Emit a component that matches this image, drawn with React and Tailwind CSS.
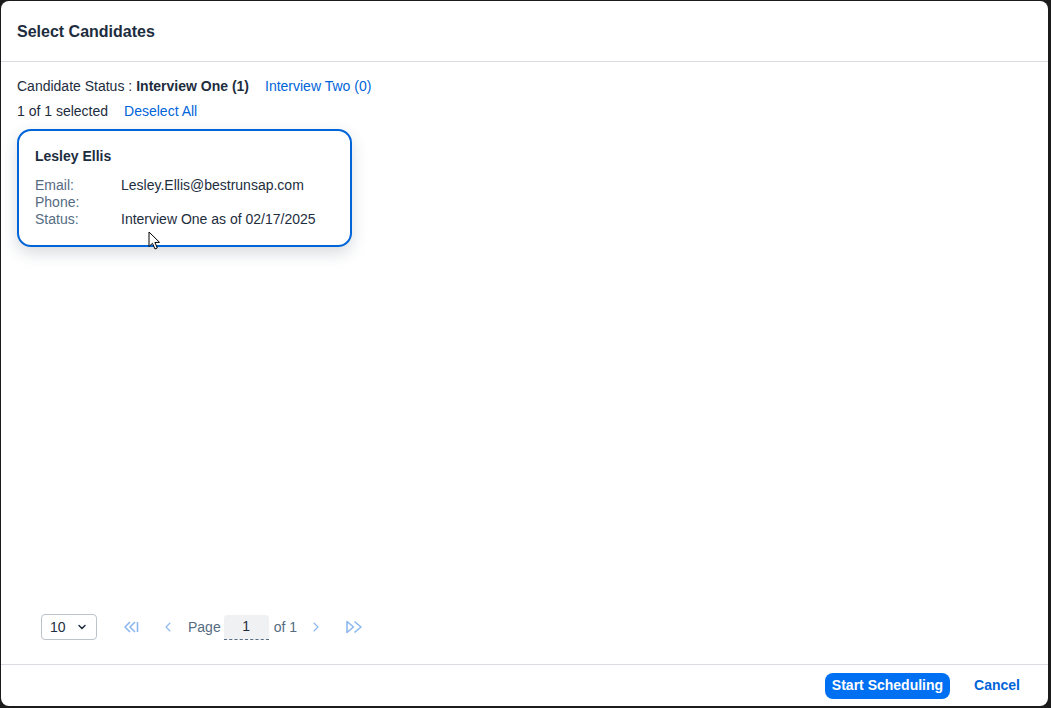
import React from 'react';
import { ChevronDown, ChevronLeft, ChevronRight } from 'lucide-react';

const font = { fontFamily: '"Liberation Sans", Arial, sans-serif' };

const candidate = {
  name: 'Lesley Ellis',
  rows: [
    { label: 'Email:', value: 'Lesley.Ellis@bestrunsap.com' },
    { label: 'Phone:', value: '' },
    { label: 'Status:', value: 'Interview One as of 02/17/2025' },
  ],
};

const FirstIcon = () => (
  <svg width="18" height="14" viewBox="0 0 18 14" fill="none" stroke="currentColor" strokeWidth="1.6" strokeLinejoin="round">
    <path d="M8 2 L3 7 L8 12" />
    <path d="M13 2 L8 7 L13 12" />
    <path d="M15.5 2 V12" />
  </svg>
);

const LastIcon = () => (
  <svg width="18" height="14" viewBox="0 0 18 14" fill="none" stroke="currentColor" strokeWidth="1.6" strokeLinejoin="round">
    <path d="M2 1.5 V12.5 L8.5 7 Z" />
    <path d="M9.5 1.5 L16 7 L9.5 12.5" />
  </svg>
);

const Cursor = () => (
  <svg className="absolute left-[147px] top-[230px]" width="13" height="20" viewBox="0 0 13 20">
    <path d="M1 1 L1 15.5 L4.5 12.3 L7 18 L9.3 17 L6.9 11.5 L11.5 11.3 Z" fill="#fff" stroke="#000" strokeWidth="1" strokeLinejoin="round" />
  </svg>
);

const CandidateCard = ({ data }) => (
  <div className="w-[335px] rounded-[14px] border-2 border-[#0064d9] bg-white px-4 pt-[15px] pb-[17px] shadow-[0_6px_16px_rgba(34,53,72,0.18)]">
    <div className="h-5 text-[14px] font-bold leading-5 text-[#1d2d3e]">{data.name}</div>
    <div className="mt-[11px]">
      {data.rows.map((row) => (
        <div key={row.label} className="flex h-[17px] text-[14px] leading-[17px]">
          <span className="w-[86px] text-[#556b82]">{row.label}</span>
          <span className="text-[#1d2d3e]">{row.value}</span>
        </div>
      ))}
    </div>
  </div>
);

export default function App() {
  return (
    <div className="h-screen w-full bg-[#1b1b1b] pt-px pl-px pr-[3px] pb-[2px]" style={font}>
      <div className="relative flex h-full flex-col rounded-lg bg-white">
        {/* Header */}
        <div className="flex h-[61px] shrink-0 items-center border-b border-[#d9dde1] px-4 pt-[2px]">
          <h1 className="text-[16px] font-bold text-[#1d2d3e]">Select Candidates</h1>
        </div>

        {/* Content */}
        <div className="flex flex-1 flex-col px-4 pt-3">
          <div className="flex h-[25px] items-center text-[14px] text-[#1d2d3e]">
            <span>Candidate Status :</span>
            <span className="ml-1 font-bold">Interview One (1)</span>
            <button type="button" className="ml-4 text-[#0064d9]">Interview Two (0)</button>
          </div>
          <div className="flex h-[25px] items-center text-[14px] text-[#1d2d3e]">
            <span>1 of 1 selected</span>
            <button type="button" className="ml-4 text-[#0064d9]">Deselect All</button>
          </div>
          <div className="mt-[5px]">
            <CandidateCard data={candidate} />
          </div>

          {/* Paginator */}
          <div className="mt-auto mb-6 flex h-[26px] items-center pl-6 text-[14px]">
            <div className="flex h-[26px] w-[56px] items-center justify-between rounded border border-[#bcc3ca] px-2 text-[#1d2d3e]">
              <span>10</span>
              <ChevronDown className="h-3 w-3" strokeWidth={3} />
            </div>
            <div className="ml-[25px] flex items-center text-[#8cb7ee]">
              <FirstIcon />
            </div>
            <ChevronLeft className="ml-[20px] h-4 w-4 text-[#8cb7ee]" strokeWidth={1.6} />
            <span className="ml-[12px] text-[#556b82]">Page</span>
            <div className="ml-[3px] flex h-[25px] w-[45px] items-center justify-center rounded-t border-b border-dashed border-[#556b82] bg-[#eff1f2] text-[#1d2d3e]">1</div>
            <span className="ml-[5px] text-[#556b82]">of 1</span>
            <ChevronRight className="ml-[11px] h-4 w-4 text-[#8cb7ee]" strokeWidth={1.6} />
            <div className="ml-[21px] flex items-center text-[#8cb7ee]">
              <LastIcon />
            </div>
          </div>
        </div>

        {/* Footer */}
        <div className="flex h-[42px] shrink-0 items-center justify-end border-t border-[#d9dde1] pr-[20px]">
          <button type="button" className="h-[26px] rounded-lg bg-[#0070f2] px-[7px] text-[14px] font-bold text-white">
            Start Scheduling
          </button>
          <button type="button" className="ml-4 h-[26px] px-2 text-[14px] font-bold text-[#0064d9]">
            Cancel
          </button>
        </div>

        <Cursor />
      </div>
    </div>
  );
}
